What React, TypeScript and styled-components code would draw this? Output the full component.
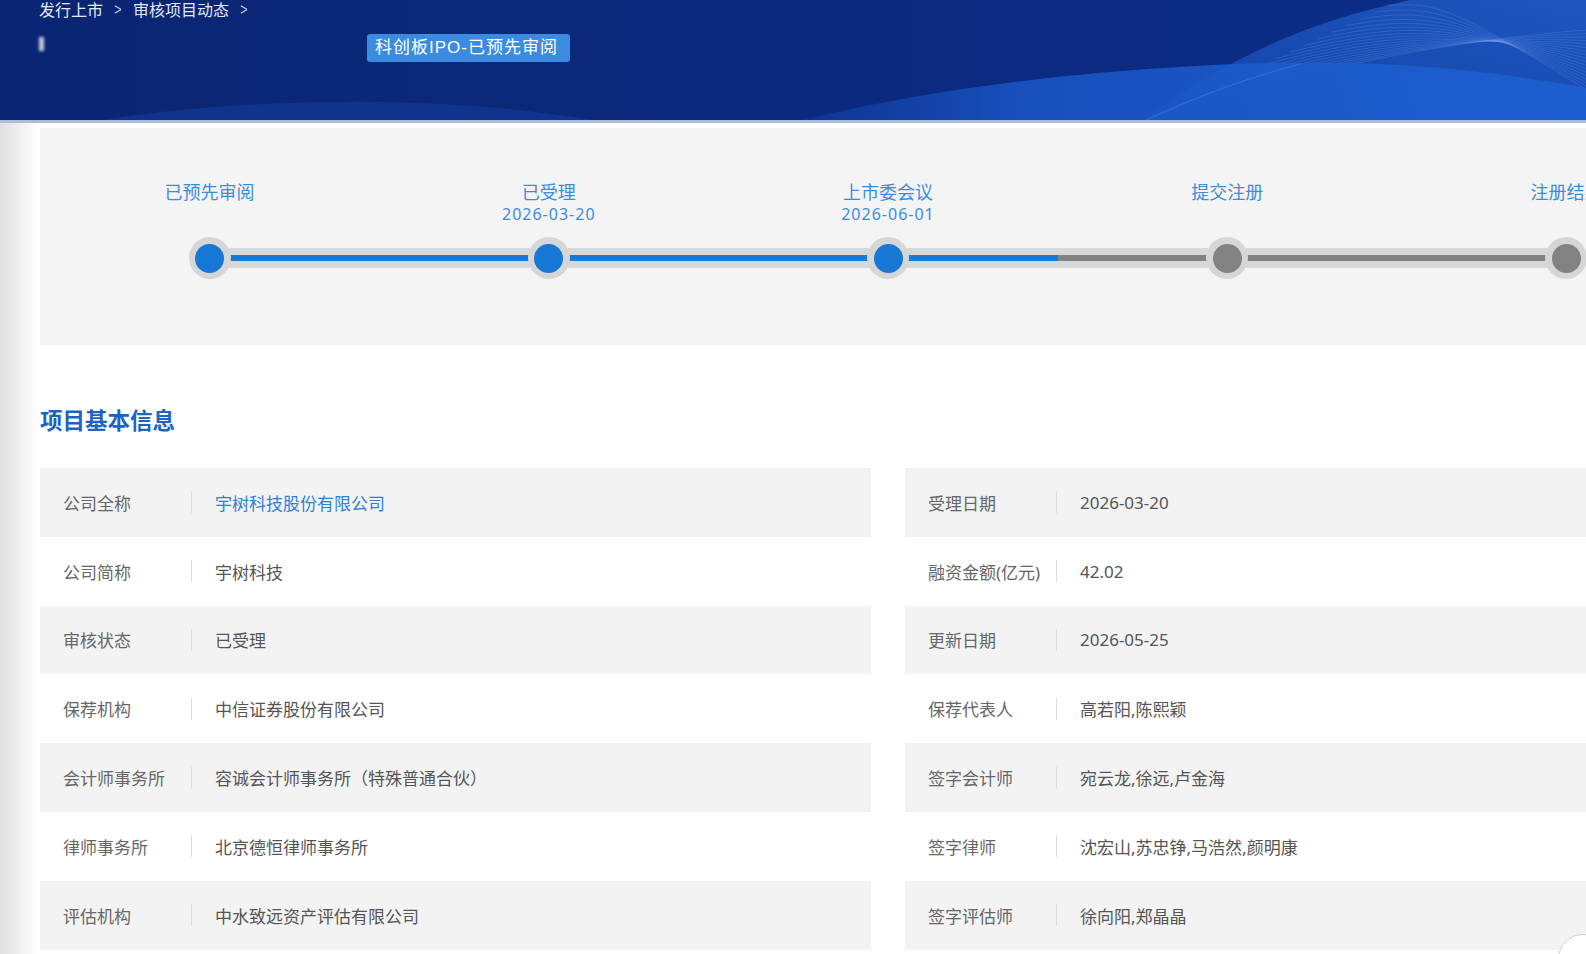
import React from 'react';
import styled, {createGlobalStyle} from 'styled-components';

const STEPS = [
  {id: 1, title: '已预先审阅', date: '', done: true, next: true},
  {id: 2, title: '已受理', date: '2026-03-20', done: true, next: true},
  {id: 3, title: '上市委会议', date: '2026-06-01', done: true, next: true},
  {id: 4, title: '提交注册', date: '', done: false, next: false},
  {id: 5, title: '注册结果', date: '', done: false, next: false},
];

const LEFT_INFO = [
  {label: '公司全称', value: '宇树科技股份有限公司', link: true},
  {label: '公司简称', value: '宇树科技'},
  {label: '审核状态', value: '已受理'},
  {label: '保荐机构', value: '中信证券股份有限公司'},
  {label: '会计师事务所', value: '容诚会计师事务所（特殊普通合伙）'},
  {label: '律师事务所', value: '北京德恒律师事务所'},
  {label: '评估机构', value: '中水致远资产评估有限公司'},
];

const RIGHT_INFO = [
  {label: '受理日期', value: '2026-03-20'},
  {label: '融资金额(亿元)', value: '42.02'},
  {label: '更新日期', value: '2026-05-25'},
  {label: '保荐代表人', value: '高若阳,陈熙颖'},
  {label: '签字会计师', value: '宛云龙,徐远,卢金海'},
  {label: '签字律师', value: '沈宏山,苏忠铮,马浩然,颜明康'},
  {label: '签字评估师', value: '徐向阳,郑晶晶'},
];

type InfoItem = {label: string; value: string; link?: boolean};

// decorative wave drawing behind the header
const HeaderArt = () => {
  const lines = Array.from({length: 18}, (_, i) => i);
  return (
    <ArtSvg viewBox="0 0 1586 123" preserveAspectRatio="none">
      <defs>
        <linearGradient id="hbg" x1="0" x2="1" y1="0" y2="0">
          <stop offset="0" stopColor="#0a2572"/>
          <stop offset="0.6" stopColor="#0b2a80"/>
          <stop offset="1" stopColor="#0c2e88"/>
        </linearGradient>
        <linearGradient id="wave" x1="0" x2="1" y1="0" y2="0">
          <stop offset="0" stopColor="#1a55c4" stopOpacity="0.2"/>
          <stop offset="0.3" stopColor="#1a57c8" stopOpacity="0.85"/>
          <stop offset="1" stopColor="#1d5fd0" stopOpacity="0.95"/>
        </linearGradient>
        <linearGradient id="ribbon" x1="0" x2="1" y1="1" y2="0">
          <stop offset="0" stopColor="#1b58c8" stopOpacity="0.5"/>
          <stop offset="1" stopColor="#2464d2" stopOpacity="0.75"/>
        </linearGradient>
      </defs>
      <rect width="1586" height="123" fill="url(#hbg)"/>
      <path d="M85 123 C200 102 420 88 610 123 Z" fill="#1a48ac" opacity="0.4"/>
      <path d="M1140 123 C1210 70 1290 25 1410 0 L1586 0 L1586 123 Z" fill="url(#ribbon)"/>
      {lines.map((i) => (
        <path
          key={i}
          d={`M${1150 + i * 14} ${118 - i * 6.6} C${1300 + i * 8} ${70 - i * 4} ${1450} ${40 - i * 2} 1586 ${30 + i * 3.5}`}
          stroke="#7aa6f0"
          strokeWidth="0.8"
          fill="none"
          opacity="0.28"
        />
      ))}
      <path d="M790 123 C900 96 1050 70 1265 63 C1400 60 1500 72 1586 88 L1586 123 Z" fill="url(#wave)"/>
      <path d="M1140 123 C1210 90 1260 75 1300 64" stroke="#7aa6f0" strokeWidth="1" fill="none" opacity="0.3"/>
      <rect y="120" width="1586" height="3" fill="#aebcdc"/>
    </ArtSvg>
  );
};

const InfoColumn = ({items}: {items: InfoItem[]}) => (
  <Column>
    {items.map((item) => (
      <InfoRow key={item.label}>
        <InfoLabel>{item.label}</InfoLabel>
        <Divider/>
        <InfoValue link={item.link}>{item.value}</InfoValue>
      </InfoRow>
    ))}
  </Column>
);

export default function App() {
  return (
    <>
      <GlobalStyle/>
      <Page>
        <Header>
          <HeaderArt/>
          <HeaderInner>
            <Breadcrumb>
              <span>发行上市</span>
              <Chevron>&gt;</Chevron>
              <span>审核项目动态</span>
              <Chevron>&gt;</Chevron>
            </Breadcrumb>
            <HeaderRow>
              <HiddenTitle/>
              <Badge>科创板IPO-已预先审阅</Badge>
            </HeaderRow>
          </HeaderInner>
        </Header>

        <Main>
          <TimelinePanel>
            {STEPS.map((step, idx) => (
              <Step key={step.id}>
                <StepText>
                  <StepLabel>{step.title}</StepLabel>
                  {step.date && <StepDate>{step.date}</StepDate>}
                </StepText>
                <Track>
                  <Half hidden={idx === 0} active={step.done}/>
                  <Dot>
                    <DotCore active={step.done}/>
                  </Dot>
                  <Half hidden={idx === STEPS.length - 1} active={step.next}/>
                </Track>
              </Step>
            ))}
          </TimelinePanel>

          <SectionTitle>项目基本信息</SectionTitle>

          <InfoGrid>
            <InfoColumn items={LEFT_INFO}/>
            <InfoColumn items={RIGHT_INFO}/>
          </InfoGrid>
        </Main>
        <FloatButton/>
      </Page>
    </>
  );
}

const GlobalStyle = createGlobalStyle`
  html, body {
    margin: 0;
    padding: 0;
    overflow: hidden;
    background: #fff;
  }
  * {
    box-sizing: border-box;
  }
  body {
    font-family: "Microsoft YaHei", "Noto Sans", "Noto Sans CJK SC", sans-serif;
  }
`

const Page = styled.div`
  position: relative;
  width: 1586px;
  height: 954px;
  overflow: hidden;
  background: linear-gradient(to right, #e1e1e1 0, #ebebeb 16px, #f8f8f8 30px, #fff 38px);
`

const Header = styled.header`
  position: relative;
  height: 123px;
  overflow: hidden;
`

const ArtSvg = styled.svg`
  position: absolute;
  inset: 0;
  width: 100%;
  height: 100%;
`

const HeaderInner = styled.div`
  position: relative;
  padding-left: 39px;
`

const Breadcrumb = styled.div`
  display: flex;
  align-items: center;
  gap: 10px;
  height: 20px;
  line-height: 20px;
  font-size: 16px;
  color: #e3e9f6;
`

const Chevron = styled.span`
  font-family: "Liberation Sans", sans-serif;
  font-size: 17px;
  color: #c9d4ec;
  transform: scaleX(0.75);
`

const HeaderRow = styled.div`
  display: flex;
  align-items: center;
  margin-top: 14px;
  height: 28px;
`

const HiddenTitle = styled.div`
  width: 328px;
  height: 28px;
  position: relative;

  &::before {
    content: "";
    position: absolute;
    left: 0;
    top: 3px;
    width: 5px;
    height: 14px;
    background: rgba(255, 255, 255, 0.75);
    filter: blur(1.5px);
  }
`

const Badge = styled.div`
  height: 28px;
  line-height: 28px;
  padding: 0 12px 0 8px;
  border-radius: 3px;
  background: #3b8be0;
  color: #fff;
  font-family: "Liberation Sans", "Noto Sans CJK SC", sans-serif;
  font-size: 17px;
  letter-spacing: 1px;
  white-space: nowrap;
`

const Main = styled.main`
  width: 1736px;
  padding: 5px 0 0 40px;
`

const TimelinePanel = styled.section`
  display: grid;
  grid-template-columns: repeat(5, 1fr);
  height: 217px;
  padding-top: 53px;
  background: #f4f4f4;
`

const Step = styled.div`
  display: flex;
  flex-direction: column;
  align-items: center;
`

const StepText = styled.div`
  height: 44px;
  text-align: center;
  color: #3b8ddc;
  white-space: nowrap;
`

const StepLabel = styled.div`
  font-size: 18px;
  line-height: 22px;
`

const StepDate = styled.div`
  font-family: "Noto Sans", sans-serif;
  font-size: 16px;
  letter-spacing: 1px;
  line-height: 22px;
`

const Track = styled.div`
  display: flex;
  align-items: center;
  width: 100%;
  height: 42px;
  margin-top: 12px;
`

const Half = styled.div<{hidden?: boolean; active?: boolean}>`
  flex: 1;
  display: flex;
  align-items: center;
  height: 20px;
  background: ${(p) => (p.hidden ? 'transparent' : '#d8d8d8')};

  &::after {
    content: "";
    display: ${(p) => (p.hidden ? 'none' : 'block')};
    width: 100%;
    height: 6px;
    background: ${(p) => (p.active ? '#1a7bd4' : '#828282')};
  }
`

const Dot = styled.div`
  display: flex;
  align-items: center;
  justify-content: center;
  flex: none;
  width: 42px;
  height: 42px;
  margin: 0 -2px;
  border-radius: 50%;
  background: #d6d6d6;
  position: relative;
  z-index: 1;
`

const DotCore = styled.div<{active?: boolean}>`
  width: 29px;
  height: 29px;
  border-radius: 50%;
  background: ${(p) => (p.active ? '#1677d4' : '#828282')};
`

const SectionTitle = styled.h2`
  margin: 61px 0 32px;
  line-height: 30px;
  font-size: 22.5px;
  font-weight: 700;
  color: #1d63c4;
`

const InfoGrid = styled.div`
  display: grid;
  grid-template-columns: 831px 831px;
  column-gap: 34px;
`

const Column = styled.div`
  display: flex;
  flex-direction: column;
`

const InfoRow = styled.div`
  display: flex;
  align-items: center;
  height: 68.8px;
  padding-left: 23px;
  font-size: 17px;

  &:nth-child(odd) {
    background: #f3f3f3;
  }
`

const InfoLabel = styled.div`
  width: 128px;
  color: #666;
  white-space: nowrap;
`

const Divider = styled.div`
  width: 1px;
  height: 22px;
  margin-right: 23px;
  background: #dcdcdc;
`

const InfoValue = styled.div<{link?: boolean}>`
  color: ${(p) => (p.link ? '#2f80d8' : '#555')};
  white-space: nowrap;
`

const FloatButton = styled.div`
  position: absolute;
  right: -22px;
  bottom: -30px;
  width: 50px;
  height: 50px;
  border-radius: 50%;
  border: 1px solid #cfcfcf;
  background: #fff;
`
